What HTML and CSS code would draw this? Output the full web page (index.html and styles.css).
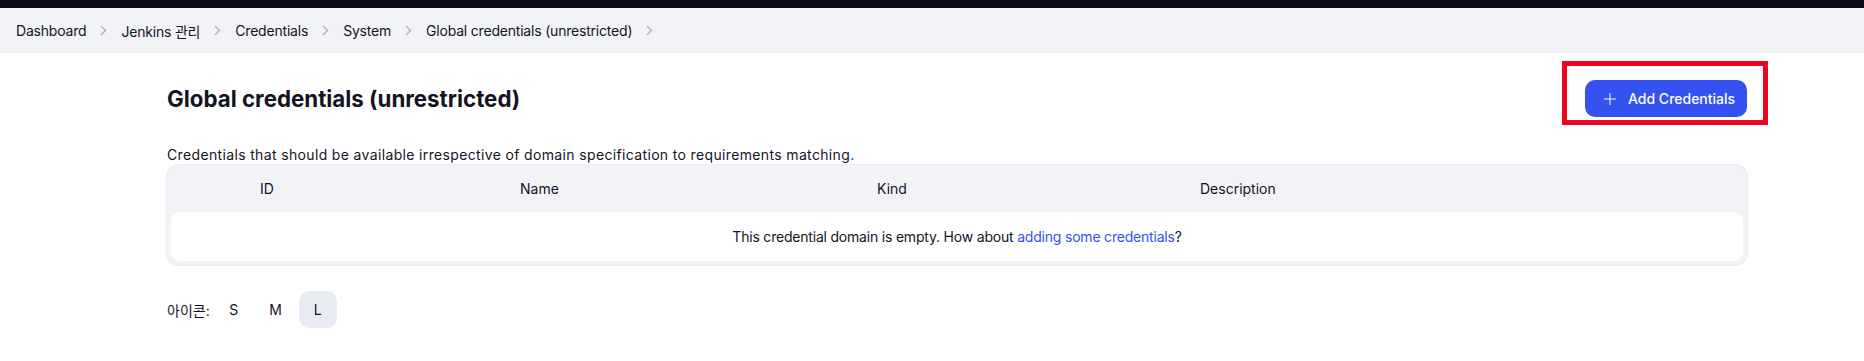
FILE: index.html
```html
<!DOCTYPE html>
<html>
<head>
    <meta charset="UTF-8">
    <title>Global credentials (unrestricted) - Jenkins</title>
    <link rel="stylesheet" href="styles.css">
</head>
<body>
    <div class="topbar"></div>

    <div class="breadcrumbs">
        <a class="crumb" href="#">Dashboard</a>
        <span class="sep"><svg width="7" height="11" viewBox="0 0 7 11"><polyline points="1,1 5.5,5.5 1,10" /></svg></span>
        <a class="crumb" href="#">Jenkins 관리</a>
        <span class="sep"><svg width="7" height="11" viewBox="0 0 7 11"><polyline points="1,1 5.5,5.5 1,10" /></svg></span>
        <a class="crumb" href="#">Credentials</a>
        <span class="sep"><svg width="7" height="11" viewBox="0 0 7 11"><polyline points="1,1 5.5,5.5 1,10" /></svg></span>
        <a class="crumb" href="#">System</a>
        <span class="sep"><svg width="7" height="11" viewBox="0 0 7 11"><polyline points="1,1 5.5,5.5 1,10" /></svg></span>
        <a class="crumb" href="#">Global credentials (unrestricted)</a>
        <span class="sep"><svg width="7" height="11" viewBox="0 0 7 11"><polyline points="1,1 5.5,5.5 1,10" /></svg></span>
    </div>

    <div class="main">
        <div class="page-header">
            <h1>Global credentials (unrestricted)</h1>
            <div class="highlight">
                <button class="btn btn-primary">
                    <svg class="plus" width="14" height="14" viewBox="0 0 14 14"><line x1="7" y1="1" x2="7" y2="13" /><line x1="1" y1="7" x2="13" y2="7" /></svg>
                    <span>Add Credentials</span>
                </button>
            </div>
        </div>

        <p class="description">Credentials that should be available irrespective of domain specification to requirements matching.</p>

        <div class="cred-table">
            <div class="table-head">
                <div></div>
                <div>ID</div>
                <div>Name</div>
                <div>Kind</div>
                <div>Description</div>
            </div>
            <div class="table-body">This credential domain is empty. How about <a href="#">adding some credentials</a>?</div>
        </div>

        <div class="icon-size">
            <span class="icon-label">아이콘:</span>
            <button class="size-btn">S</button>
            <button class="size-btn">M</button>
            <button class="size-btn active">L</button>
        </div>
    </div>
</body>
</html>
```

FILE: styles.css
```css
body {
    margin: 0;
    font-family: Inter, "Noto Sans CJK KR", sans-serif;
    font-size: 14px;
    color: #14141f;
    background: #fff;
}

.topbar {
    height: 8px;
    background: #0a0916;
}

.breadcrumbs {
    display: flex;
    align-items: center;
    height: 45px;
    padding-left: 16px;
    background: #f2f3f7;
}

.crumb {
    color: #14141f;
    text-decoration: none;
    font-size: 14px;
    letter-spacing: -0.2px;
}

.sep {
    display: flex;
    justify-content: center;
    width: 35px;
}

.sep polyline {
    fill: none;
    stroke: #a9adbf;
    stroke-width: 1.3;
}

.main {
    padding: 27px 117px 0 167px;
}

.page-header {
    display: flex;
    justify-content: space-between;
    align-items: center;
    height: 37px;
}

.page-header h1 {
    margin: 0;
    font-size: 22.3px;
    font-weight: 700;
}

.highlight {
    position: relative;
}

/* red annotation box */
.highlight::after {
    content: "";
    position: absolute;
    left: -23px;
    top: -19px;
    width: 196px;
    height: 54px;
    border: 5px solid #ee0420;
}

.btn {
    display: flex;
    align-items: center;
    gap: 11px;
    width: 162px;
    height: 37px;
    padding: 0 0 0 18px;
    border: none;
    border-radius: 10px;
    font-family: inherit;
    font-size: 14px;
    font-weight: 500;
    cursor: pointer;
}

.btn-primary {
    background: #3352f1;
    color: #fff;
}

.plus line {
    stroke: rgba(255, 255, 255, 0.7);
    stroke-width: 1.4;
}

.description {
    margin: 28px 0 0;
    line-height: 20px;
    letter-spacing: 0.35px;
}

.cred-table {
    background: #f2f3f7;
    border-radius: 12px;
    padding: 0 4px 4px;
    box-shadow: 0 0 0 1px #ebecf1;
}

.table-head {
    display: grid;
    grid-template-columns: 89px 260px 357px 323px 1fr;
    align-items: center;
    height: 47px;
}

.table-body {
    height: 49px;
    line-height: 49px;
    text-align: center;
    background: #fff;
    border-radius: 9px;
    letter-spacing: -0.2px;
}

.table-body a {
    color: #3451ef;
    text-decoration: none;
}

.icon-size {
    display: flex;
    align-items: center;
    gap: 4px;
    margin-top: 26px;
}

.icon-label {
    margin-right: 1px;
}

.size-btn {
    width: 38px;
    height: 37px;
    border: none;
    border-radius: 10px;
    background: transparent;
    font-family: inherit;
    font-size: 14px;
    color: #14141f;
}

.size-btn.active {
    background: #e9ebf3;
}
```
